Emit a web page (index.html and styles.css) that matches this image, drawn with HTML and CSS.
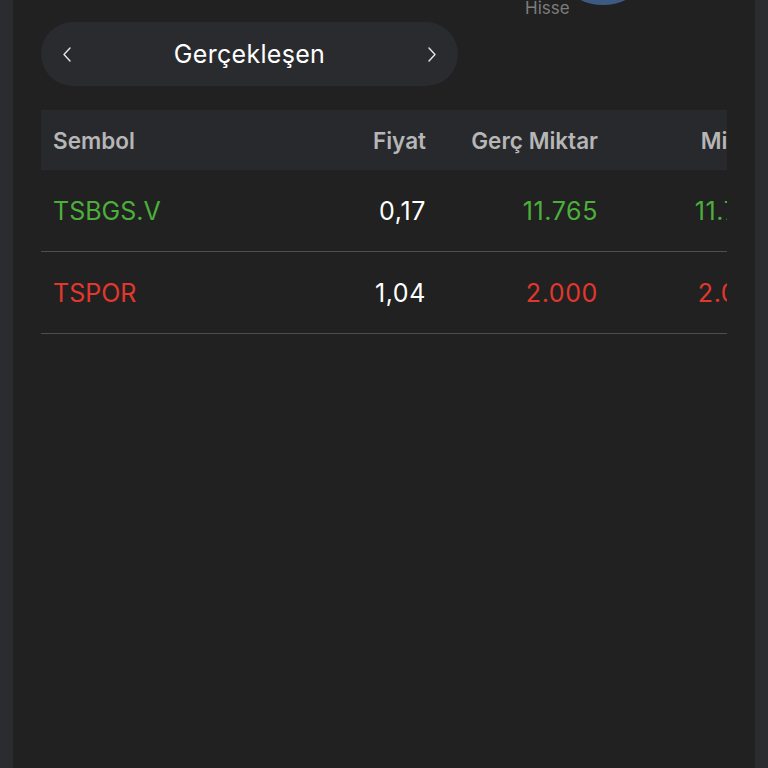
FILE: index.html
```html
<!DOCTYPE html>
<html lang="tr">
<head>
  <meta charset="UTF-8" />
  <meta name="viewport" content="width=device-width, initial-scale=1.0" />
  <title>Gerçekleşen</title>
  <link rel="stylesheet" href="styles.css">
</head>
<body>
  <main class="panel">
    <!-- üst sekmeler -->
    <div class="tabs">
      <span class="tab-label">Hisse</span>
      <span class="tab-dot"></span>
    </div>

    <div class="switcher">
      <button class="nav">
        <svg width="8" height="15" viewBox="0 0 8 15"><polyline points="7,1 1,7.5 7,14" /></svg>
      </button>
      <span class="switcher-title">Gerçekleşen</span>
      <button class="nav">
        <svg width="8" height="15" viewBox="0 0 8 15"><polyline points="1,1 7,7.5 1,14" /></svg>
      </button>
    </div>

    <div class="table-wrap">
      <div class="table">
        <div class="row head">
          <div>Sembol</div>
          <div class="num">Fiyat</div>
          <div class="num">Gerç Miktar</div>
          <div class="num">Miktar</div>
        </div>
        <div class="row up">
          <div class="sym">TSBGS.V</div>
          <div class="num price">0,17</div>
          <div class="num">11.765</div>
          <div class="num">11.765</div>
        </div>
        <div class="row down">
          <div class="sym">TSPOR</div>
          <div class="num price">1,04</div>
          <div class="num">2.000</div>
          <div class="num">2.000</div>
        </div>
      </div>
    </div>
  </main>
</body>
</html>
```

FILE: styles.css
```css
html, body {
  height: 100%;
}
body {
  margin: 0;
  background: #2a2c30;
  font-family: Inter, "Noto Sans", sans-serif;
  overflow: hidden;
}
.panel {
  margin: 0 13px;
  min-height: 100%;
  background: #212121;
  padding: 0 28px;
  box-sizing: border-box;
}
.tabs {
  display: flex;
  height: 22px;
  padding-left: 484px;
}
.tab-label {
  color: #7d7d7d;
  font-size: 17px;
  line-height: 18px;
  margin-top: -1px;
}
.tab-dot {
  width: 68px;
  height: 40px;
  margin-top: -35px;
  margin-left: -1px;
  border-radius: 50%;
  background: #3d5a82;
}
.switcher {
  width: 417px;
  height: 64px;
  border-radius: 32px;
  background: #2a2b2f;
  display: flex;
  align-items: center;
  justify-content: space-between;
  padding: 0 22px;
  box-sizing: border-box;
}
.nav {
  background: none;
  border: none;
  padding: 0;
  width: 8px;
  height: 15px;
  display: flex;
}
.nav svg polyline {
  fill: none;
  stroke: #e6e6e6;
  stroke-width: 1.4;
  stroke-linecap: round;
  stroke-linejoin: round;
}
.switcher-title {
  color: #ffffff;
  font-size: 25px;
  letter-spacing: 0.3px;
}
.table-wrap {
  margin-top: 24px;
  overflow: hidden;
}
.table {
  width: 729px;
}
.row {
  display: grid;
  grid-template-columns: 253px 120px 172px 172px;
  align-items: center;
  padding-left: 12px;
  height: 81px;
  border-bottom: 1px solid #4e4e4e;
  font-size: 25px;
}
.row .num {
  letter-spacing: 0.6px;
}
.row.head {
  height: 60px;
  border-bottom: none;
  background: #28292d;
  color: #b6b6b6;
  font-size: 22.5px;
  font-weight: 600;
}
.row.head .num {
  letter-spacing: 0;
}
.num {
  text-align: right;
}
.up {
  color: #4caf3c;
}
.down {
  color: #e2372c;
}
.price {
  color: #ffffff;
}
```
